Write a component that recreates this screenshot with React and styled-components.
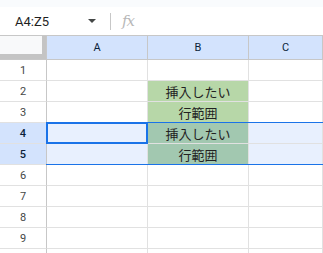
import React from "react";
import styled, { createGlobalStyle, css } from "styled-components";

const GlobalStyle = createGlobalStyle`
  html, body { margin: 0; padding: 0; background: #ffffff; }
  body { font-family: Roboto, "Liberation Sans", "Noto Sans CJK JP", sans-serif; }
`;

const Page = styled.div`
  width: 323px;
  height: 253px;
  overflow: hidden;
  position: relative;
  background: #ffffff;
`;

const TopStrip = styled.div`
  height: 7px;
  background: #f9fbfd;
`;

const FormulaBar = styled.div`
  height: 28px;
  display: flex;
  align-items: center;
  border-bottom: 1px solid #c7c7c7;
  background: #ffffff;
`;

const NameBox = styled.div`
  width: 80px;
  padding-left: 15px;
  font-size: 13px;
  color: #1f1f1f;
  font-family: Roboto, "Liberation Sans", sans-serif;
`;

const Caret = styled.div`
  width: 0;
  height: 0;
  border-left: 4px solid transparent;
  border-right: 4px solid transparent;
  border-top: 4px solid #444746;
  margin-left: -7px;
`;

const Divider = styled.div`
  width: 1px;
  height: 17px;
  background: #c7c7c7;
  margin-left: 14px;
`;

const Fx = styled.div`
  margin-left: 11px;
  font-family: "DejaVu Serif", "Liberation Serif", serif;
  font-style: italic;
  font-size: 15px;
  color: #b8b8b8;
  letter-spacing: -1px;
`;

const Sheet = styled.div`
  position: relative;
  display: grid;
  grid-template-columns: 47px 101px 101px 1fr;
  grid-template-rows: 24px repeat(10, 21px);
`;

const Cell = styled.div`
  box-sizing: border-box;
  border-right: 1px solid #e1e1e1;
  border-bottom: 1px solid #e1e1e1;
  display: flex;
  align-items: center;
  justify-content: center;
  font-family: "Liberation Sans", "Noto Sans CJK JP", sans-serif;
  font-size: 13px;
  color: #222222;
  background: ${(p) => p.$bg || "#ffffff"};
`;

const Corner = styled.div`
  box-sizing: border-box;
  border-right: 1px solid #c7c7c7;
  border-bottom: 1px solid #c7c7c7;
  background: #ffffff;
  & > div {
    width: 42px;
    height: 18px;
    background: #f8f9fa;
    border-right: 4px solid #c4c4c4;
    border-bottom: 5px solid #c4c4c4;
  }
`;

const ColHead = styled.div`
  box-sizing: border-box;
  border-right: 1px solid #c7c7c7;
  border-bottom: 1px solid #c7c7c7;
  background: #d3e3fd;
  display: flex;
  align-items: center;
  justify-content: center;
  font-size: 11px;
  color: #0b1f3a;
  font-family: Roboto, "Liberation Sans", sans-serif;
`;

const RowHead = styled.div`
  box-sizing: border-box;
  border-right: 1px solid #c7c7c7;
  border-bottom: 1px solid #e1e1e1;
  display: flex;
  align-items: center;
  justify-content: center;
  font-size: 11px;
  font-family: Roboto, "Liberation Sans", sans-serif;
  color: #444746;
  background: #ffffff;
  ${(p) =>
    p.$selected &&
    css`
      background: #d3e3fd;
      color: #0b1f3a;
      font-weight: 500;
    `}
`;

const RangeBand = styled.div`
  position: absolute;
  left: 46px;
  right: 0;
  top: 86px;
  height: 41px;
  border-top: 1px solid #1a73e8;
  border-bottom: 1px solid #1a73e8;
  pointer-events: none;
`;

const ActiveCell = styled.div`
  position: absolute;
  left: 46px;
  top: 86px;
  width: 98px;
  height: 18px;
  border: 2px solid #1a73e8;
  pointer-events: none;
`;

const GREEN = "#b7d7a8";
const GREEN_SEL = "#a2c8b0";
const SEL = "#e8f0fe";

// row 10 only peeks in at the bottom edge, so its number is not shown
const rows = [
  { n: 1, label: "1", b: "" },
  { n: 2, label: "2", b: "挿入したい", green: true },
  { n: 3, label: "3", b: "行範囲", green: true },
  { n: 4, label: "4", b: "挿入したい", green: true, sel: true },
  { n: 5, label: "5", b: "行範囲", green: true, sel: true },
  { n: 6, label: "6" },
  { n: 7, label: "7" },
  { n: 8, label: "8" },
  { n: 9, label: "9" },
  { n: 10, label: "" },
];

export default function App() {
  return (
    <Page>
      <GlobalStyle />
      <TopStrip />
      <FormulaBar>
        <NameBox>A4:Z5</NameBox>
        <Caret />
        <Divider />
        <Fx>fx</Fx>
      </FormulaBar>
      <Sheet>
        <Corner>
          <div />
        </Corner>
        <ColHead>A</ColHead>
        <ColHead>B</ColHead>
        <ColHead>C</ColHead>
        {rows.map((r) => (
          <React.Fragment key={r.n}>
            <RowHead $selected={r.sel}>{r.label}</RowHead>
            <Cell $bg={r.sel ? SEL : undefined} />
            <Cell $bg={r.green ? (r.sel ? GREEN_SEL : GREEN) : undefined}>{r.b}</Cell>
            <Cell $bg={r.sel ? SEL : undefined} />
          </React.Fragment>
        ))}
        <RangeBand />
        <ActiveCell />
      </Sheet>
    </Page>
  );
}
